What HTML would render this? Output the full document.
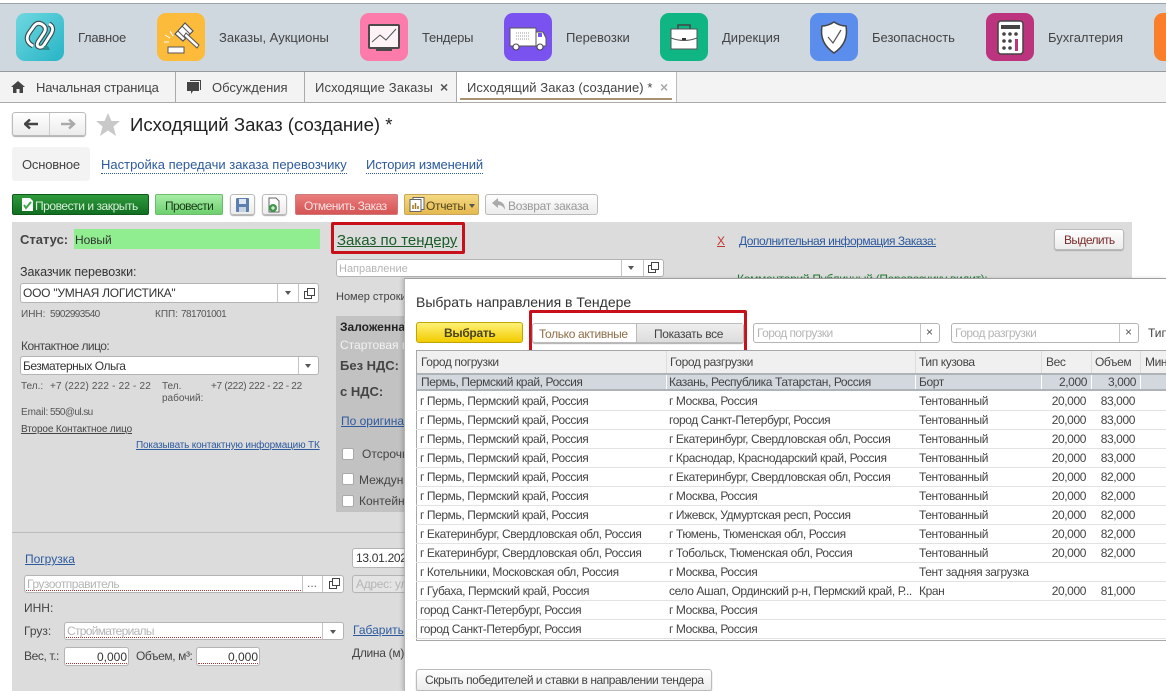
<!DOCTYPE html>
<html lang="ru"><head><meta charset="utf-8"><title>Исходящий Заказ</title>
<style>
html,body{margin:0;padding:0;background:#fff}
#p{position:relative;width:1166px;height:691px;overflow:hidden;background:#fff;font:12px/14px "Liberation Sans",Arial,sans-serif;color:#444}
#p div,#p span,#p a,#p svg{position:absolute;display:block;box-sizing:border-box}
.t{white-space:nowrap}
.n{font-size:13px;line-height:16px;top:30px}
.i{top:13px;width:48px;height:48px;border-radius:9px}
.f{background:#fff;border:1px solid #b4b4b4;border-radius:3px}
.v{top:0;bottom:0;width:1px;background:#c4c4c4}
.b{border:1px solid #bbb;border-radius:3px;background:linear-gradient(#fff,#ececec);box-shadow:0 1px 1px #aaa}
.l{color:#2d5a9e;text-decoration:underline}
.ph{color:#b5b5b5}
.r{left:416px;width:750px;height:19px;border-bottom:1px solid #e2e2e2;font-size:12px;line-height:17px;color:#444;letter-spacing:-.4px}
.r span{top:1px;white-space:nowrap}
.a{left:4px}.c{left:253px}.d{left:503px}.w{right:80px}.o{right:31px}
.s{font-size:10px;line-height:12px;white-space:nowrap;color:#555}
.dm{width:0;height:0;border-left:3px solid transparent;border-right:3px solid transparent;border-top:4px solid #555}
.red{border:3px solid #c8101a;border-radius:2px}
.cb{width:12px;height:12px;background:#fff;border:1px solid #aaa;border-radius:2px}
.dot{height:1px;border-bottom:1px dotted #a33}
.h{letter-spacing:-.4px}
</style></head><body><div id="p">

<div style="left:0;top:0;width:1166px;height:72px;background:#cfd7df;border-top:1px solid #fff"></div>
<div style="left:0;top:3px;width:1166px;height:1px;background:#9aa3ab"></div>
<div style="left:0;top:0;width:1166px;height:3px;background:#fff"></div>
<div style="left:0;top:71px;width:1166px;height:1px;background:#9a9a9a"></div>

<div class="i" style="left:16px;background:linear-gradient(135deg,#6ed8e0,#27b4c6)"><svg width="48" height="48" viewBox="0 0 48 48" fill="none"><path d="M17 33 Q8 28 13 20 L18 13 Q22 8 27 12 Q31 15 28 20 L22 29 Q20 33 23 34 Q26 35 28 32 L35 21 Q39 14 33 11" stroke="#38484a" stroke-width="5"/><path d="M17 33 Q8 28 13 20 L18 13 Q22 8 27 12 Q31 15 28 20 L22 29 Q20 33 23 34 Q26 35 28 32 L35 21 Q39 14 33 11" stroke="#fff" stroke-width="2.800"/><path d="M27 37 l7 0 l-2 -4 l-4 0z" fill="#2b8f92"/></svg></div>
<div class="t n" style="left:78px;letter-spacing:-.25px">Главное</div>
<div class="i" style="left:157px;background:#fdbb3b"><svg width="48" height="48" viewBox="0 0 48 48" fill="none"><path d="M18 21 L28 10 L36 18 L26 28z" fill="#fff" stroke="#555" stroke-width="1.200"/><path d="M21 18 L29 26 M25 13 L33 21" stroke="#555"/><path d="M29 20 L42 32 L40 35 L27 23z" fill="#fff" stroke="#555"/><rect x="11" y="34" width="16" height="6" fill="#fff" stroke="#555"/><path d="M8 22l5 3M13 18l3 5M7 29h5" stroke="#fff"/></svg></div>
<div class="t n" style="left:219px">Заказы, Аукционы</div>
<div class="i" style="left:360px;background:#fd7bab"><svg width="48" height="48" viewBox="0 0 48 48" fill="none"><rect x="9" y="12" width="30" height="23" rx="1" fill="#fdf3f6" stroke="#4a4a4a" stroke-width="2"/><path d="M12 29 L20 22 L26 27 L36 16" stroke="#555"/><rect x="16" y="36" width="16" height="2" fill="#4a4a4a"/></svg></div>
<div class="t n" style="left:422px;letter-spacing:-.25px">Тендеры</div>
<div class="i" style="left:504px;background:#7a52f0"><svg width="48" height="48" viewBox="0 0 48 48" fill="none"><rect x="6" y="15" width="26" height="18" fill="#fff" stroke="#555"/><path d="M12 20h14M12 23h14M12 26h14" stroke="#999" stroke-dasharray="1 1"/><path d="M32 19h7l3 6v8H32z" fill="#fff" stroke="#555"/><rect x="34" y="20" width="4" height="4" fill="#7a52f0"/><circle cx="12" cy="34" r="3" fill="#fff" stroke="#444"/><circle cx="36" cy="34" r="3" fill="#fff" stroke="#444"/></svg></div>
<div class="t n" style="left:566px">Перевозки</div>
<div class="i" style="left:660px;background:#0fb583"><svg width="48" height="48" viewBox="0 0 48 48" fill="none"><path d="M18 16v-4h12v4" stroke="#444" stroke-width="1.500"/><rect x="11" y="16" width="26" height="20" fill="#fff" stroke="#555"/><path d="M11 25 Q24 30 37 25" stroke="#555"/><rect x="22" y="25" width="4" height="2" fill="#333"/></svg></div>
<div class="t n" style="left:722px">Дирекция</div>
<div class="i" style="left:810px;background:#5b8dec"><svg width="48" height="48" viewBox="0 0 48 48" fill="none"><path d="M24 9 Q30 13 36 13 Q39 30 24 40 Q9 30 12 13 Q18 13 24 9z" fill="#fff" stroke="#444" stroke-width="1.500"/><path d="M18 24 L23 30 L31 17" stroke="#555" stroke-width="1.200"/></svg></div>
<div class="t n" style="left:872px">Безопасность</div>
<div class="i" style="left:986px;background:#bc347e"><svg width="48" height="48" viewBox="0 0 48 48"><rect x="12" y="8" width="25" height="33" rx="3" fill="#fff" stroke="#444" stroke-width="1.500"/><rect x="15" y="12" width="19" height="4" fill="#444"/><g fill="#444"><circle cx="18" cy="21" r="1.800"/><circle cx="24" cy="21" r="1.800"/><circle cx="30" cy="21" r="1.800"/><circle cx="18" cy="28" r="1.800"/><circle cx="24" cy="28" r="1.800"/><circle cx="18" cy="35" r="1.800"/><circle cx="24" cy="35" r="1.800"/></g><rect x="29" y="26" width="3" height="12" fill="#bc347e"/></svg></div>
<div class="t n" style="left:1048px">Бухгалтерия</div>
<div class="i" style="left:1154px;width:30px;background:#fb7f2b"></div>

<div style="left:0;top:72px;width:1166px;height:30px;background:#f3f3f3"></div>
<div style="left:0;top:102px;width:1166px;height:1px;background:#a9a9a9"></div>
<div style="left:175px;top:72px;width:1px;height:30px;background:#aaa"></div>
<div style="left:304px;top:72px;width:1px;height:30px;background:#aaa"></div>
<div style="left:456px;top:72px;width:1px;height:30px;background:#aaa"></div>
<div style="left:676px;top:72px;width:1px;height:30px;background:#bbb"></div>
<div style="left:457px;top:72px;width:219px;height:30px;background:#fff"></div>
<div style="left:460px;top:98px;width:212px;height:2px;background:#a8926f"></div>
<svg style="left:11px;top:80px" width="14" height="14" viewBox="0 0 14 14"><path d="M7 1 L14 7 H12 V13 H8.500 V9 H5.500 V13 H2 V7 H0z" fill="#444"/></svg>
<svg style="left:186px;top:79px" width="16" height="16" viewBox="0 0 16 16"><path d="M4 1h11v10h-1V2H4z" fill="#444"/><path d="M1 3h12v9H7l-2 3v-3H1z" fill="#444"/></svg>
<div class="t n" style="left:36px;top:80px;letter-spacing:-.17px">Начальная страница</div>
<div class="t n" style="left:212px;top:80px">Обсуждения</div>
<div class="t n" style="left:315px;top:80px;letter-spacing:.12px">Исходящие Заказы</div>
<div class="t" style="left:440px;top:80px;font-size:14px;font-weight:bold;color:#555">×</div>
<div class="t n" style="left:467px;top:80px;letter-spacing:.07px">Исходящий Заказ (создание) *</div>
<div class="t" style="left:660px;top:80px;font-size:14px;font-weight:bold;color:#aaa">×</div>

<div class="b" style="left:12px;top:112px;width:74px;height:24px"></div>
<div style="left:49px;top:113px;width:1px;height:22px;background:#ccc"></div>
<svg style="left:24px;top:118px" width="54" height="12" viewBox="0 0 54 12"><path d="M1 6h13M6 1.500L1 6l5 4.500" stroke="#444" stroke-width="2.500" fill="none"/><path d="M37 6h13M45 1.500L50 6l-5 4.500" stroke="#aaa" stroke-width="2.500" fill="none"/></svg>
<svg style="left:96px;top:113px" width="24" height="23" viewBox="0 0 24 23"><path d="M12 0l3.500 8H24l-6.500 5.500L20 23l-8-5.500L4 23l2.500-9.500L0 8h8.500z" fill="#c9c9c9"/></svg>
<div class="t" style="left:130px;top:114px;font-size:18.600px;line-height:22px;color:#222">Исходящий Заказ (создание) *</div>

<div style="left:12px;top:147px;width:78px;height:34px;background:#f3f3f3;border-radius:3px"></div>
<div class="t n" style="left:22px;top:157px;letter-spacing:-.2px">Основное</div>
<div class="t n" style="left:101px;top:157px;color:#2d5a9e;border-bottom:1px dotted #2d5a9e">Настройка передачи заказа перевозчику</div>
<div class="t n" style="left:366px;top:157px;color:#2d5a9e;border-bottom:1px dotted #2d5a9e;letter-spacing:-.15px">История изменений</div>

<div style="left:12px;top:194px;width:137px;height:21px;border-radius:2px;background:linear-gradient(#2f9a3c,#116e22);border:1px solid #0e5a1b"></div>
<svg style="left:22px;top:198px" width="11" height="13" viewBox="0 0 11 13"><path d="M0 0h8l3 3v10H0z" fill="#fff"/><path d="M2 7l2 3 5-6" stroke="#39a845" stroke-width="2" fill="none"/></svg>
<div class="t" style="left:35px;top:199px;color:#d8f0d8;letter-spacing:-.45px">Провести и закрыть</div>
<div style="left:155px;top:194px;width:68px;height:21px;border-radius:2px;background:linear-gradient(#a6eda6,#6ed06e);border:1px solid #6dbb6d"></div>
<div class="t" style="left:165px;top:199px;color:#1c3a1c;letter-spacing:-.6px">Провести</div>
<div class="b" style="left:230px;top:194px;width:25px;height:21px"></div>
<svg style="left:236px;top:198px" width="13" height="14" viewBox="0 0 13 14"><rect width="13" height="14" rx="1" fill="#5b7fae"/><rect x="3" y="1" width="7" height="5" fill="#dfe8f2"/><rect x="3" y="9" width="7" height="5" fill="#c7d3e2"/></svg>
<div class="b" style="left:262px;top:194px;width:25px;height:21px"></div>
<svg style="left:267px;top:197px" width="15" height="16" viewBox="0 0 15 16"><path d="M2 1h7l3 3v11H2z" fill="#fff" stroke="#666"/><circle cx="6" cy="11" r="4" fill="#3d9a4a"/><path d="M4 11h4M6 9v4" stroke="#fff"/></svg>
<div style="left:295px;top:194px;width:103px;height:21px;border-radius:2px;background:linear-gradient(#e97c7c,#d65555);border:1px solid #cf7a7a"></div>
<div class="t" style="left:304px;top:199px;color:#fbe3e3;letter-spacing:-.5px">Отменить Заказ</div>
<div style="left:404px;top:194px;width:75px;height:21px;border-radius:2px;background:linear-gradient(#f4d982,#e5b94f);border:1px solid #c9a75a"></div>
<svg style="left:409px;top:197px" width="16" height="15" viewBox="0 0 16 15"><rect x="4" y="0.500" width="11" height="12" fill="#fff" stroke="#666"/><rect x="1" y="2.500" width="11" height="12" fill="#fff" stroke="#666"/><path d="M4 12V8M6.500 12V6M9 12V9" stroke="#a3781f" stroke-width="1.500"/></svg>
<div class="t" style="left:426px;top:199px;color:#514420;letter-spacing:-.3px">Отчеты</div>
<div class="dm" style="left:469px;top:204px"></div>
<div class="b" style="left:485px;top:194px;width:113px;height:21px;box-shadow:none"></div>
<svg style="left:492px;top:198px" width="13" height="12" viewBox="0 0 13 12"><path d="M0 5l6-5v3q7 1 7 9q-2-5-7-5v3z" fill="#aaa"/></svg>
<div class="t" style="left:508px;top:199px;color:#999;letter-spacing:-.3px">Возврат заказа</div>

<div style="left:12px;top:222px;width:1120px;height:469px;background:#dcdcdc"></div>
<div style="left:12px;top:532px;width:392px;height:1px;background:#bbb"></div>
<div class="t" style="left:20px;top:233px;font-weight:bold;font-size:13px">Статус:</div>
<div style="left:74px;top:229px;width:246px;height:20px;background:#90ee90"></div>
<div class="t" style="left:75px;top:233px;color:#333;letter-spacing:-.1px">Новый</div>
<div class="red" style="left:331px;top:222px;width:134px;height:32px"></div>
<div class="t" style="left:337px;top:232px;font-size:15px;line-height:18px;color:#1a5c2a;text-decoration:underline">Заказ по тендеру</div>
<div class="t" style="left:717px;top:234px;color:#c0352f;text-decoration:underline">X</div>
<div class="t l" style="left:739px;top:234px;letter-spacing:-.47px">Дополнительная информация Заказа:</div>
<div class="b" style="left:1054px;top:229px;width:70px;height:21px"></div>
<div class="t" style="left:1064px;top:233px;color:#7a2a2a;letter-spacing:-.6px">Выделить</div>
<div class="t" style="left:737px;top:272px;color:#1f7a33;letter-spacing:-.3px">Комментарий Публичный (Перевозчику видит):</div>

<div class="f" style="left:336px;top:259px;width:328px;height:18px"><div class="v" style="left:284px"></div><div class="v" style="left:306px"></div></div>
<div class="t ph" style="left:339px;top:262px;font-size:11px">Направление</div>
<div class="dm" style="left:628px;top:266px"></div>
<svg style="left:648px;top:262px" width="11" height="11" viewBox="0 0 11 11" fill="none" stroke="#444"><rect x="3.500" y="0.500" width="7" height="7"/><path d="M3.500 3.500H0.500v7h7V7.500"/></svg>
<div class="t" style="left:20px;top:265px;font-size:12.500px;color:#333;letter-spacing:-.05px">Заказчик перевозки:</div>
<div class="f" style="left:20px;top:283px;width:299px;height:20px"><div class="v" style="left:256px"></div><div class="v" style="left:277px"></div></div>
<div class="t" style="left:23px;top:286px;color:#333;letter-spacing:-.25px">ООО "УМНАЯ ЛОГИСТИКА"</div>
<div class="dm" style="left:285px;top:291px"></div>
<svg style="left:304px;top:288px" width="11" height="11" viewBox="0 0 11 11" fill="none" stroke="#444"><rect x="3.500" y="0.500" width="7" height="7"/><path d="M3.500 3.500H0.500v7h7V7.500"/></svg>
<div class="s" style="left:21px;top:309px">ИНН:</div><div class="s" style="left:50px;top:309px;letter-spacing:-.6px">5902993540</div>
<div class="s" style="left:155px;top:309px">КПП:</div><div class="s" style="left:181px;top:309px;letter-spacing:-.55px">781701001</div>
<div class="t" style="left:21px;top:339px;color:#444;letter-spacing:-.55px">Контактное лицо:</div>
<div class="f" style="left:20px;top:356px;width:299px;height:19px"><div class="v" style="left:277px"></div></div>
<div class="t" style="left:23px;top:359px;color:#333;letter-spacing:-.5px">Безматерных Ольга</div>
<div class="dm" style="left:305px;top:364px"></div>
<div class="s" style="left:21px;top:381px">Тел.:</div><div class="s" style="left:50px;top:381px;letter-spacing:.18px">+7 (222) 222 - 22 - 22</div>
<div class="s" style="left:162px;top:381px">Тел.<br>рабочий:</div><div class="s" style="left:211px;top:381px;letter-spacing:-.28px">+7 (222) 222 - 22 - 22</div>
<div class="s" style="left:21px;top:407px;letter-spacing:-.1px">Email:</div><div class="s" style="left:50px;top:407px;letter-spacing:-.6px">550@ul.su</div>
<div class="s" style="left:21px;top:424px;text-decoration:underline;color:#444;letter-spacing:-.13px">Второе Контактное лицо</div>
<div class="s" style="left:136px;top:440px;text-decoration:underline;color:#2d5a9e;letter-spacing:-.17px">Показывать контактную информацию ТК</div>

<div class="t" style="left:336px;top:290px;font-size:11px">Номер строки</div>
<div style="left:336px;top:316px;width:68px;height:196px;background:#c2c2c2"></div>
<div class="t" style="left:340px;top:320px;font-weight:bold;color:#222">Заложенная</div>
<div class="t" style="left:340px;top:338px;color:#f2f2f2">Стартовая цена</div>
<div class="t" style="left:340px;top:359px;font-weight:bold;font-size:13px">Без НДС:</div>
<div class="t" style="left:340px;top:385px;font-weight:bold;font-size:13px">с НДС:</div>
<div class="t l" style="left:341px;top:414px">По оригиналу</div>
<div class="cb" style="left:342px;top:448px"></div><div class="t" style="left:362px;top:447px">Отсрочка</div>
<div class="cb" style="left:342px;top:473px"></div><div class="t" style="left:359px;top:473px">Международная</div>
<div class="cb" style="left:342px;top:495px"></div><div class="t" style="left:359px;top:494px">Контейнер</div>

<div class="t l" style="left:25px;top:552px">Погрузка</div>
<div class="f" style="left:352px;top:548px;width:70px;height:20px"></div>
<div class="t" style="left:356px;top:551px;color:#333;letter-spacing:-.3px">13.01.2021</div>
<div class="f" style="left:24px;top:575px;width:320px;height:18px"><div class="v" style="left:277px"></div><div class="v" style="left:297px"></div><div class="dot" style="left:1px;top:14px;width:275px"></div></div>
<div class="t ph" style="left:27px;top:577px;letter-spacing:-.5px">Грузоотправитель</div>
<div class="t" style="left:307px;top:576px;color:#666">...</div>
<svg style="left:329px;top:578px" width="11" height="11" viewBox="0 0 11 11" fill="none" stroke="#444"><rect x="3.500" y="0.500" width="7" height="7"/><path d="M3.500 3.500H0.500v7h7V7.500"/></svg>
<div class="f" style="left:352px;top:575px;width:70px;height:18px;background:#e4e4e4"></div>
<div class="t ph" style="left:356px;top:577px;letter-spacing:-.3px">Адрес: улица</div>
<div class="t" style="left:24px;top:601px">ИНН:</div>
<div class="t" style="left:24px;top:624px">Груз:</div>
<div class="f" style="left:64px;top:622px;width:280px;height:18px"><div class="v" style="left:257px"></div><div class="dot" style="left:1px;top:14px;width:255px"></div></div>
<div class="t ph" style="left:67px;top:624px;letter-spacing:-.7px">Стройматериалы</div>
<div class="dm" style="left:330px;top:630px"></div>
<div class="t l" style="left:353px;top:623px">Габариты</div>
<div class="t" style="left:24px;top:649px;letter-spacing:-.4px">Вес, т.:</div>
<div class="f" style="left:64px;top:647px;width:65px;height:19px"><div class="dot" style="left:1px;top:15px;width:61px"></div></div>
<div class="t" style="left:97px;top:650px;color:#333">0,000</div>
<div class="t" style="left:136px;top:649px;letter-spacing:-.4px">Объем, м³:</div>
<div class="f" style="left:196px;top:647px;width:64px;height:19px"><div class="dot" style="left:1px;top:15px;width:60px"></div></div>
<div class="t" style="left:228px;top:650px;color:#333">0,000</div>
<div class="t" style="left:352px;top:646px;letter-spacing:-.3px">Длина (м)</div>

<!-- dialog -->
<div style="left:404px;top:278px;width:762px;height:413px;background:#fff;border-top:1px solid #9f9f9f;border-left:1px solid #b5b5b5;box-shadow:-2px 0 3px rgba(0,0,0,.15)"></div>
<div class="t" style="left:416px;top:294px;font-size:14px;line-height:16px;color:#333">Выбрать направления в Тендере</div>
<div style="left:416px;top:322px;width:107px;height:21px;border-radius:3px;background:linear-gradient(#fff176,#f2cc00);border:1px solid #c0a400"></div>
<div class="t" style="left:444px;top:326px;font-weight:bold;color:#4a4420;letter-spacing:-.3px">Выбрать</div>
<div class="red" style="left:529px;top:310px;width:218px;height:43px"></div>
<div class="b" style="left:532px;top:323px;width:212px;height:20px;background:#fff"></div>
<div style="left:636px;top:324px;width:107px;height:18px;background:linear-gradient(#eee,#ddd);border-left:1px solid #bbb"></div>
<div class="t" style="left:539px;top:327px;color:#8f6d45;letter-spacing:-.35px">Только активные</div>
<div class="t" style="left:654px;top:327px;color:#444;letter-spacing:-.35px">Показать все</div>
<div class="f" style="left:753px;top:323px;width:187px;height:20px"><div class="v" style="left:166px"></div></div>
<div class="t ph" style="left:757px;top:326px;letter-spacing:-.55px">Город погрузки</div>
<div class="t" style="left:926px;top:325px;color:#555">×</div>
<div class="f" style="left:951px;top:323px;width:188px;height:20px"><div class="v" style="left:167px"></div></div>
<div class="t ph" style="left:955px;top:326px;letter-spacing:-.5px">Город разгрузки</div>
<div class="t" style="left:1125px;top:325px;color:#555">×</div>
<div class="t" style="left:1148px;top:326px">Тип</div>

<div style="left:416px;top:350px;width:750px;height:291px;border:1px solid #a8a8a8;border-right:0"></div>
<div style="left:417px;top:351px;width:749px;height:22px;background:#f0f0f0"></div>
<div style="left:666px;top:351px;width:1px;height:22px;background:#ddd"></div>
<div style="left:915px;top:351px;width:1px;height:22px;background:#ddd"></div>
<div style="left:1041px;top:351px;width:1px;height:22px;background:#ddd"></div>
<div style="left:1091px;top:351px;width:1px;height:22px;background:#ddd"></div>
<div style="left:1140px;top:351px;width:1px;height:22px;background:#ddd"></div>
<div class="t h" style="left:421px;top:355px">Город погрузки</div>
<div class="t h" style="left:670px;top:355px">Город разгрузки</div>
<div class="t h" style="left:919px;top:355px">Тип кузова</div>
<div class="t h" style="left:1046px;top:355px">Вес</div>
<div class="t h" style="left:1095px;top:355px">Объем</div>
<div class="t h" style="left:1145px;top:355px">Мин</div>

<div class="r" style="top:373px;left:417px;height:18px;background:#d3d8df;border-top:2px solid #aeb3b8;border-bottom:2px solid #aeb3b8;line-height:14px"><span class="a" style="top:0">Пермь, Пермский край, Россия</span><span class="c" style="top:0;left:252px">Казань, Республика Татарстан, Россия</span><span class="d" style="top:0;left:502px">Борт</span><span class="w" style="top:0">2,000</span><span class="o" style="top:0">3,000</span><span style="left:249px;top:0;width:1px;height:14px;background:#fff"></span><span style="left:498px;top:0;width:1px;height:14px;background:#fff"></span><span style="left:624px;top:0;width:1px;height:14px;background:#fff"></span><span style="left:674px;top:0;width:1px;height:14px;background:#fff"></span><span style="left:723px;top:0;width:1px;height:14px;background:#fff"></span></div>
<div class="r" style="top:392px"><span class="a">г Пермь, Пермский край, Россия</span><span class="c">г Москва, Россия</span><span class="d">Тентованный</span><span class="w">20,000</span><span class="o">83,000</span></div>
<div class="r" style="top:411px"><span class="a">г Пермь, Пермский край, Россия</span><span class="c">город Санкт-Петербург, Россия</span><span class="d">Тентованный</span><span class="w">20,000</span><span class="o">83,000</span></div>
<div class="r" style="top:430px"><span class="a">г Пермь, Пермский край, Россия</span><span class="c">г Екатеринбург, Свердловская обл, Россия</span><span class="d">Тентованный</span><span class="w">20,000</span><span class="o">83,000</span></div>
<div class="r" style="top:449px"><span class="a">г Пермь, Пермский край, Россия</span><span class="c">г Краснодар, Краснодарский край, Россия</span><span class="d">Тентованный</span><span class="w">20,000</span><span class="o">83,000</span></div>
<div class="r" style="top:468px"><span class="a">г Пермь, Пермский край, Россия</span><span class="c">г Екатеринбург, Свердловская обл, Россия</span><span class="d">Тентованный</span><span class="w">20,000</span><span class="o">82,000</span></div>
<div class="r" style="top:487px"><span class="a">г Пермь, Пермский край, Россия</span><span class="c">г Москва, Россия</span><span class="d">Тентованный</span><span class="w">20,000</span><span class="o">82,000</span></div>
<div class="r" style="top:506px"><span class="a">г Пермь, Пермский край, Россия</span><span class="c">г Ижевск, Удмуртская респ, Россия</span><span class="d">Тентованный</span><span class="w">20,000</span><span class="o">82,000</span></div>
<div class="r" style="top:525px"><span class="a">г Екатеринбург, Свердловская обл, Россия</span><span class="c">г Тюмень, Тюменская обл, Россия</span><span class="d">Тентованный</span><span class="w">20,000</span><span class="o">82,000</span></div>
<div class="r" style="top:544px"><span class="a">г Екатеринбург, Свердловская обл, Россия</span><span class="c">г Тобольск, Тюменская обл, Россия</span><span class="d">Тентованный</span><span class="w">20,000</span><span class="o">82,000</span></div>
<div class="r" style="top:563px"><span class="a">г Котельники, Московская обл, Россия</span><span class="c">г Москва, Россия</span><span class="d">Тент задняя загрузка</span></div>
<div class="r" style="top:582px"><span class="a">г Губаха, Пермский край, Россия</span><span class="c">село Ашап, Ординский р-н, Пермский край, Р...</span><span class="d">Кран</span><span class="w">20,000</span><span class="o">81,000</span></div>
<div class="r" style="top:601px"><span class="a">город Санкт-Петербург, Россия</span><span class="c">г Москва, Россия</span></div>
<div class="r" style="top:620px"><span class="a">город Санкт-Петербург, Россия</span><span class="c">г Москва, Россия</span></div>

<div class="b" style="left:416px;top:669px;width:296px;height:22px"></div>
<div class="t" style="left:425px;top:673px;letter-spacing:-.46px">Скрыть победителей и ставки в направлении тендера</div>
</div></body></html>
